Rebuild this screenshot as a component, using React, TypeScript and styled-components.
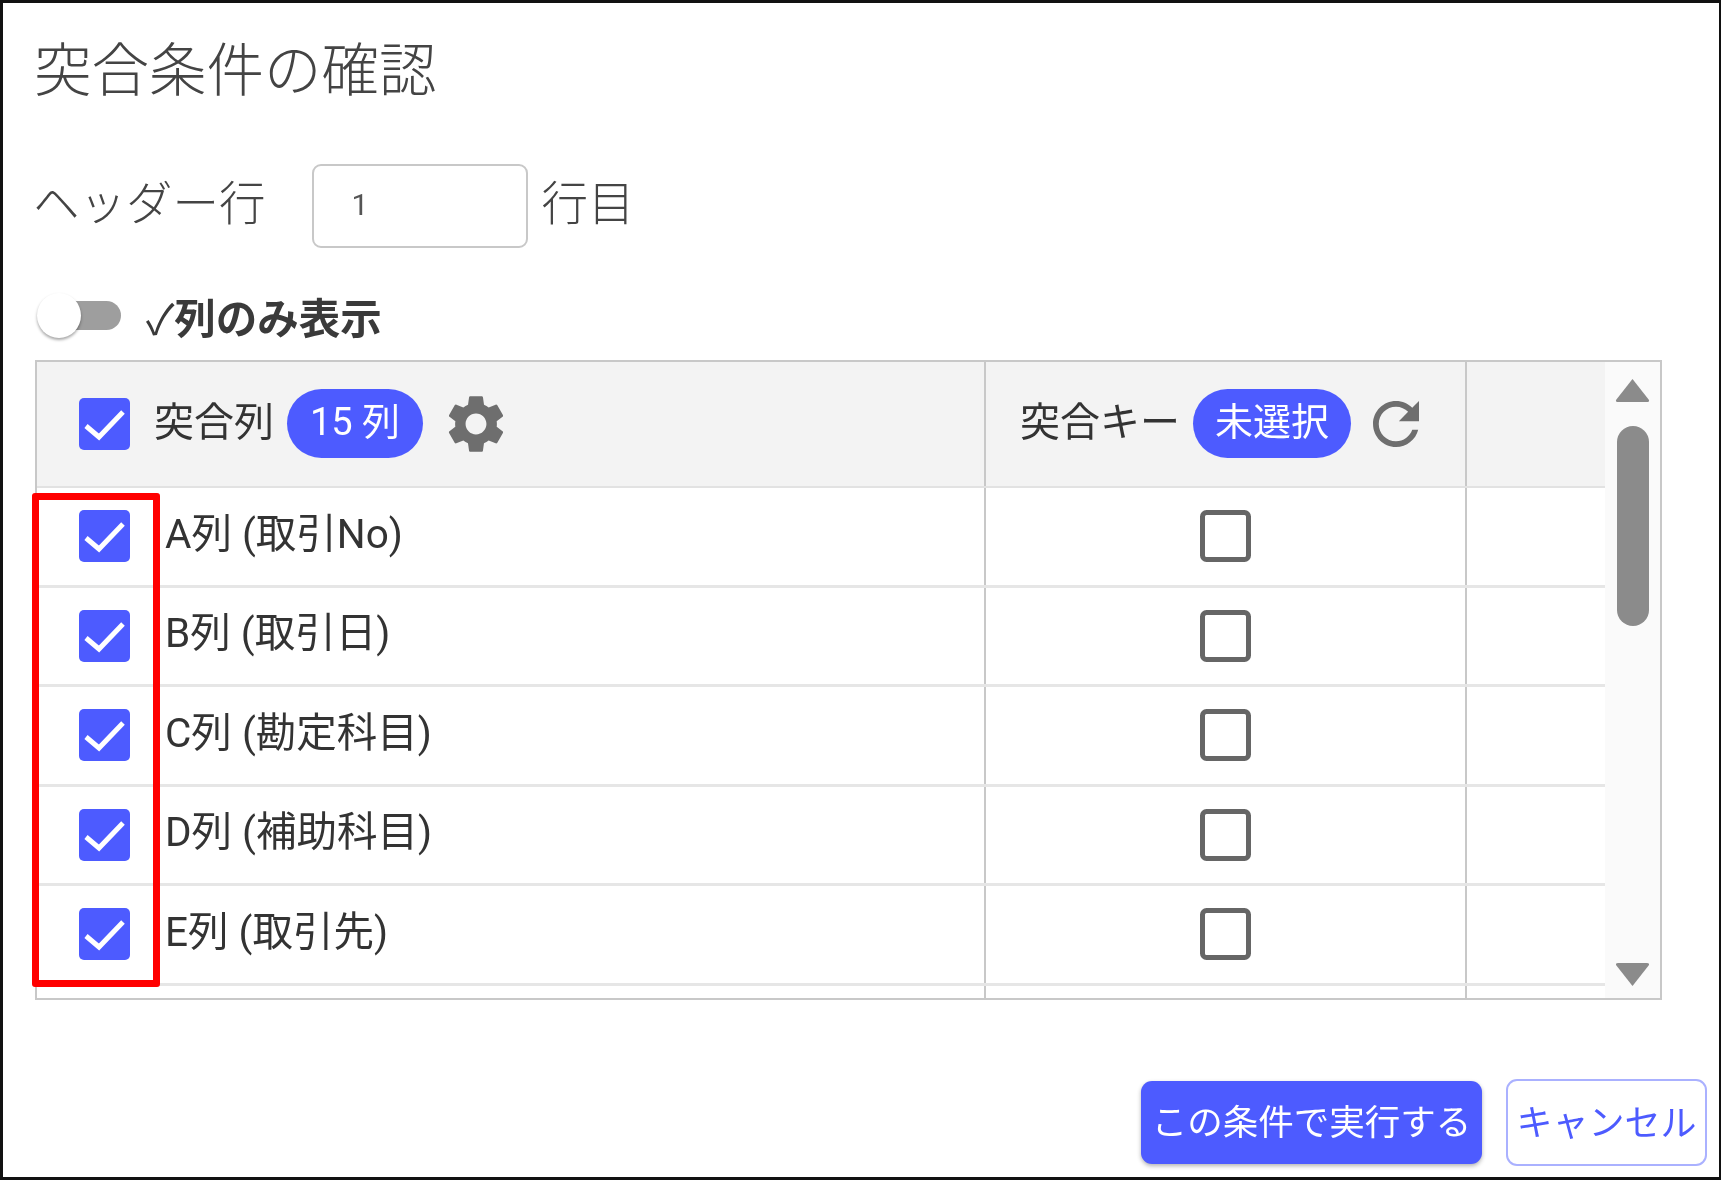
import React from "react";
import styled, { createGlobalStyle } from "styled-components";

const BLUE = "#4d5bff";
const FONT = `Roboto, "Noto Sans CJK JP", sans-serif`;

const Global = createGlobalStyle`
  html, body { margin: 0; padding: 0; background: #fff; }
  * { box-sizing: border-box; }
`;

const Frame = styled.div`
  position: relative;
  width: 1721px;
  height: 1180px;
  border: 3px solid #111;
  border-right-width: 2px;
  background: #fff;
  font-family: ${FONT};
  color: #333;
  padding: 37px 0 0 32px;
  overflow: hidden;
  filter: blur(0.45px);
`;

const Title = styled.h1`
  margin: 0 0 0 -1px;
  font-size: 57.5px;
  line-height: 64px;
  font-weight: 300;
  color: #444;
`;

const HeaderRowLine = styled.div`
  display: flex;
  align-items: center;
  margin: 60px 0 0 -2px;
  height: 84px;
`;

const FieldLabel = styled.span`
  font-size: 46.5px;
  font-weight: 300;
  color: #444;
  padding-bottom: 14px;
  white-space: nowrap;
`;

const NumberBox = styled.div`
  width: 216px;
  height: 84px;
  margin: 0 14px 0 46px;
  padding: 0 0 4px 38px;
  border: 2px solid #c8c8c8;
  border-radius: 9px;
  display: flex;
  align-items: center;
  font-size: 30px;
  color: #555;
`;

const ToggleLine = styled.div`
  display: flex;
  align-items: center;
  height: 46px;
  margin-top: 45px;
`;

const Toggle = styled.div`
  position: relative;
  width: 84px;
  height: 46px;
  flex: none;
  margin-left: 2px;
`;

const ToggleTrack = styled.div`
  position: absolute;
  left: 20px;
  right: 0;
  top: 8px;
  height: 29px;
  border-radius: 15px;
  background: #9e9e9e;
`;

const ToggleKnob = styled.div`
  position: absolute;
  left: 0;
  top: 0;
  width: 44px;
  height: 45px;
  border-radius: 50%;
  background: #fff;
  box-shadow: 0 2px 3px rgba(0, 0, 0, 0.35);
`;

const ToggleLabel = styled.span`
  margin-left: 25px;
  font-size: 41.5px;
  font-weight: 700;
  color: #3a3a3a;
  white-space: nowrap;
`;

const ToggleTick = styled.span`
  font-weight: 400;
`;

const Table = styled.div`
  display: flex;
  width: 1627px;
  height: 640px;
  margin-top: 21px;
  border: 2px solid #c8c8c8;
`;

const TableBody = styled.div`
  flex: 1;
  min-width: 0;
  overflow: hidden;
`;

const Cols = "grid-template-columns: 949px 481px 1fr;";

const HeadRow = styled.div`
  display: grid;
  ${Cols}
  height: 126px;
  background: #f3f3f3;
  border-bottom: 2px solid #e2e2e2;
`;

const Row = styled.div`
  display: grid;
  ${Cols}
  height: 99.5px;
  border-bottom: 3px solid #e6e6e6;
`;

const Cell = styled.div<{ $center?: boolean; $last?: boolean }>`
  display: flex;
  align-items: center;
  justify-content: ${(p) => (p.$center ? "center" : "flex-start")};
  border-right: ${(p) => (p.$last ? "none" : "2px solid #c8c8c8")};
`;

const HeadFirst = styled(Cell)`
  padding-left: 42px;
`;

const HeadKey = styled(Cell)`
  padding-left: 34px;
`;

const NameCell = styled(Cell)`
  padding-left: 42px;
`;

const HeadText = styled.span<{ $gap: number }>`
  font-size: 40px;
  color: #333;
  margin-left: ${(p) => p.$gap}px;
  padding-bottom: 10px;
  white-space: nowrap;
`;

const Pill = styled.span<{ $w: number; $gap: number }>`
  display: inline-flex;
  align-items: center;
  justify-content: center;
  width: ${(p) => p.$w}px;
  height: 69px;
  margin-left: ${(p) => p.$gap}px;
  margin-bottom: 2px;
  padding-bottom: 10px;
  border-radius: 35px;
  background: ${BLUE};
  color: #fff;
  font-size: 38px;
  white-space: nowrap;
`;

const RowName = styled.span`
  margin-left: 35px;
  font-size: 40.5px;
  color: #333;
  padding-bottom: 12px;
  white-space: nowrap;
`;

const CheckBox = styled.svg`
  width: 51px;
  height: 52px;
  flex: none;
  display: block;
`;

const IconSlot = styled.svg<{ $w: number; $gap: number }>`
  width: ${(p) => p.$w}px;
  height: ${(p) => p.$w}px;
  margin-left: ${(p) => p.$gap}px;
  flex: none;
  fill: #6e6e6e;
`;

const ScrollTrack = styled.div`
  width: 55px;
  flex: none;
  background: #fafafa;
  display: flex;
  flex-direction: column;
  align-items: center;
  padding: 16px 0 11px;
`;

const ScrollThumb = styled.div`
  width: 32px;
  height: 200px;
  margin-top: 24px;
  border-radius: 16px;
  background: #8b8b8b;
`;

const Arrow = styled.svg`
  width: 35px;
  height: 24px;
  flex: none;
  fill: #8b8b8b;
`;

const ArrowDown = styled(Arrow)`
  margin-top: auto;
`;

const Footer = styled.div`
  display: flex;
  align-items: center;
  justify-content: flex-end;
  gap: 24px;
  width: 1672px;
  margin-top: 79px;
`;

const PrimaryButton = styled.button`
  width: 341px;
  height: 83px;
  padding: 0 0 6px;
  border: none;
  border-radius: 11px;
  background: ${BLUE};
  color: #fff;
  font-family: ${FONT};
  font-size: 35.5px;
  box-shadow: 0 2px 4px rgba(0, 0, 0, 0.3);
  white-space: nowrap;
`;

const GhostButton = styled.button`
  width: 201px;
  height: 87px;
  padding: 0 0 6px;
  border: 2px solid #aab1ff;
  border-radius: 11px;
  background: #fff;
  color: ${BLUE};
  font-family: ${FONT};
  font-size: 36px;
  white-space: nowrap;
`;

const Highlight = styled.div`
  position: absolute;
  left: 29px;
  top: 490px;
  width: 128px;
  height: 494px;
  border: 7px solid #ff0000;
  border-radius: 3px;
  pointer-events: none;
`;

const Checked = () => (
  <CheckBox viewBox="0 0 51 52">
    <rect width="51" height="52" rx="5" fill={BLUE} />
    <path d="M7 28 L20 39 L44 14" fill="none" stroke="#fff" strokeWidth="5" />
  </CheckBox>
);

const Unchecked = () => (
  <CheckBox viewBox="0 0 51 52">
    <rect x="2.5" y="2.5" width="46" height="47" rx="4" fill="#fff" stroke="#666" strokeWidth="5" />
  </CheckBox>
);

const GEAR =
  "M19.14 12.94c.04-.3.06-.61.06-.94 0-.32-.02-.64-.07-.94l2.03-1.58c.18-.14.23-.41.12-.61l-1.92-3.32c-.12-.22-.37-.29-.59-.22l-2.39.96c-.5-.38-1.03-.7-1.62-.94l-.36-2.54c-.04-.24-.24-.41-.48-.41h-3.84c-.24 0-.43.17-.47.41l-.36 2.54c-.59.24-1.13.57-1.62.94l-2.39-.96c-.22-.08-.47 0-.59.22L2.74 8.87c-.12.21-.08.47.12.61l2.03 1.58c-.05.3-.09.63-.09.94s.02.64.07.94l-2.03 1.58c-.18.14-.23.41-.12.61l1.92 3.32c.12.22.37.29.59.22l2.39-.96c.5.38 1.03.7 1.62.94l.36 2.54c.05.24.24.41.48.41h3.84c.24 0 .44-.17.47-.41l.36-2.54c.59-.24 1.13-.56 1.62-.94l2.39.96c.22.08.47 0 .59-.22l1.92-3.32c.12-.22.07-.47-.12-.61l-2.01-1.58zM12 15.6c-1.98 0-3.6-1.62-3.6-3.6s1.62-3.6 3.6-3.6 3.6 1.62 3.6 3.6-1.62 3.6-3.6 3.6z";
const REFRESH =
  "M17.65 6.35C16.2 4.9 14.21 4 12 4c-4.42 0-7.99 3.58-7.99 8s3.57 8 7.99 8c3.73 0 6.84-2.55 7.73-6h-2.08c-.82 2.33-3.04 4-5.65 4-3.31 0-6-2.69-6-6s2.69-6 6-6c1.66 0 3.14.69 4.22 1.78L13 11h7V4l-2.35 2.35z";

const columns = ["A列 (取引No)", "B列 (取引日)", "C列 (勘定科目)", "D列 (補助科目)", "E列 (取引先)"];

export default function App() {
  return (
    <Frame>
      <Global />
      <Title>突合条件の確認</Title>
      <HeaderRowLine>
        <FieldLabel>ヘッダー行</FieldLabel>
        <NumberBox>1</NumberBox>
        <FieldLabel>行目</FieldLabel>
      </HeaderRowLine>
      <ToggleLine>
        <Toggle>
          <ToggleTrack />
          <ToggleKnob />
        </Toggle>
        <ToggleLabel>
          <ToggleTick>✓</ToggleTick>列のみ表示
        </ToggleLabel>
      </ToggleLine>
      <Table>
        <TableBody>
          <HeadRow>
            <HeadFirst>
              <Checked />
              <HeadText $gap={24}>突合列</HeadText>
              <Pill $w={136} $gap={13}>15 列</Pill>
              <IconSlot $w={58} $gap={24} viewBox="2.5 2 19 20">
                <path d={GEAR} />
              </IconSlot>
            </HeadFirst>
            <HeadKey $last={false}>
              <HeadText $gap={0}>突合キー</HeadText>
              <Pill $w={158} $gap={13}>未選択</Pill>
              <IconSlot $w={46} $gap={22} viewBox="4 4 16 16">
                <path d={REFRESH} />
              </IconSlot>
            </HeadKey>
            <Cell $last />
          </HeadRow>
          {columns.map((name) => (
            <Row key={name}>
              <NameCell>
                <Checked />
                <RowName>{name}</RowName>
              </NameCell>
              <Cell $center>
                <Unchecked />
              </Cell>
              <Cell $last />
            </Row>
          ))}
          <Row>
            <Cell />
            <Cell />
            <Cell $last />
          </Row>
        </TableBody>
        <ScrollTrack>
          <Arrow viewBox="0 0 35 24">
            <path d="M17.5 1 L34 22 Q34.5 24 32 24 L3 24 Q.5 24 1 22 Z" />
          </Arrow>
          <ScrollThumb />
          <ArrowDown viewBox="0 0 35 24">
            <path d="M17.5 23 L34 2 Q34.5 0 32 0 L3 0 Q.5 0 1 2 Z" />
          </ArrowDown>
        </ScrollTrack>
      </Table>
      <Footer>
        <PrimaryButton>この条件で実行する</PrimaryButton>
        <GhostButton>キャンセル</GhostButton>
      </Footer>
      <Highlight />
    </Frame>
  );
}
